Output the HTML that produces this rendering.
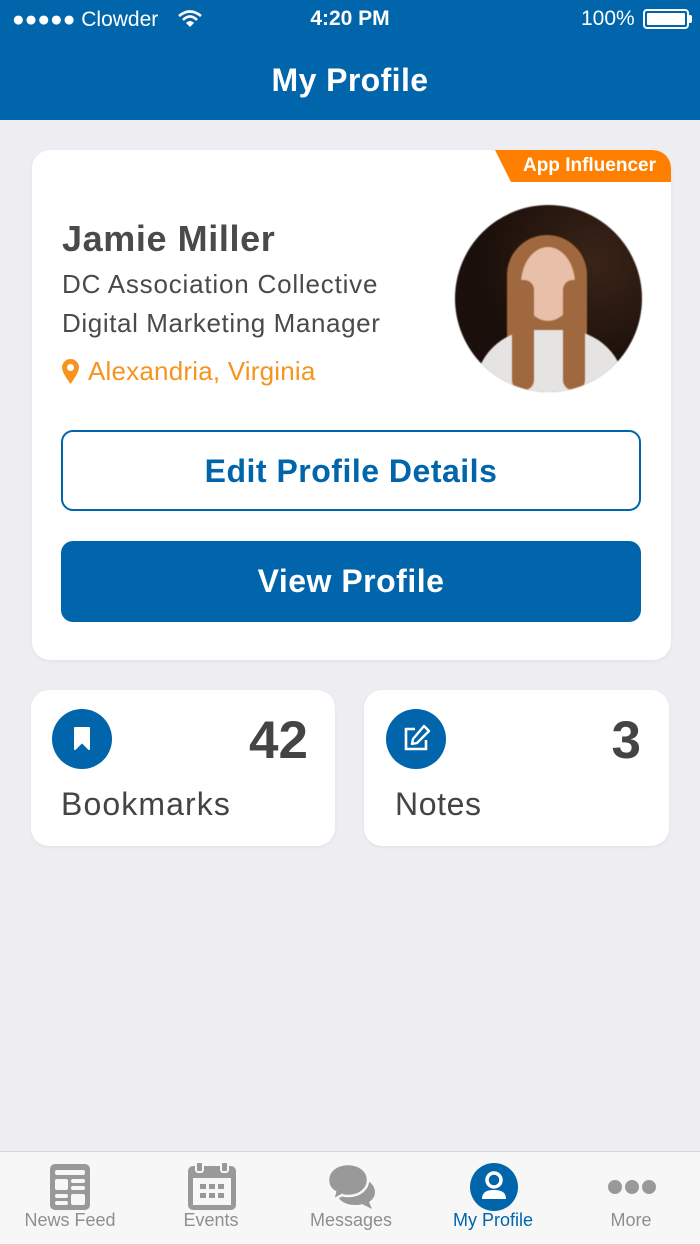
<!DOCTYPE html>
<html><head><meta charset="utf-8"><style>
*{margin:0;padding:0;box-sizing:border-box}
body{width:700px;height:1244px;background:#ededf2;font-family:"Liberation Sans",sans-serif;position:relative;overflow:hidden;color:#444}
.hdr{position:absolute;left:0;top:0;width:700px;height:120px;background:#0065ab;color:#fff}
.abs{position:absolute}
.card{position:absolute;background:#fff;border-radius:18px;box-shadow:0 1px 3px rgba(0,0,0,.06)}
.btn{position:absolute;left:61px;width:580px;height:81px;border-radius:12px;font-weight:bold;font-size:32px;text-align:center;line-height:79px;letter-spacing:.5px}
.tab{position:absolute;top:1210px;width:140px;text-align:center;font-size:18px;color:#8e8e93}
</style></head><body>
<div class="hdr">
  <div class="abs" style="left:12px;top:8px;font-size:21px;">●●●●● Clowder</div>
  <svg class="abs" style="left:177px;top:9px" width="26" height="20" viewBox="0 0 26 20"><path d="M2 7 Q13 -2 24 7" stroke="#fff" stroke-width="2.6" fill="none"/><path d="M6 11 Q13 4 20 11" stroke="#fff" stroke-width="2.6" fill="none"/><path d="M13 18 L9 14 Q13 10 17 14Z" fill="#fff"/></svg>
  <div class="abs" style="left:0;width:700px;top:7px;text-align:center;font-size:21px;font-weight:bold">4:20 PM</div>
  <div class="abs" style="left:581px;top:7px;font-size:21px">100%</div>
  <div class="abs" style="left:643px;top:9px;width:46px;height:20px;border:2px solid #fff;border-radius:4px;padding:2px"><div style="background:#fff;width:100%;height:100%;border-radius:1px"></div></div>
  <div class="abs" style="left:689px;top:15px;width:3px;height:8px;background:#fff;border-radius:0 2px 2px 0"></div>
  <div class="abs" style="left:0;width:700px;top:62px;text-align:center;font-size:32px;font-weight:bold;letter-spacing:.4px">My Profile</div>
</div>

<div class="card" style="left:32px;top:150px;width:639px;height:510px;overflow:hidden">
  <div class="abs" style="right:0;top:0;width:176px;height:32px;background:#ff8000;clip-path:polygon(0 0,100% 0,100% 100%,16px 100%);border-top-right-radius:18px"></div>
  <div class="abs" style="right:15px;top:5px;color:#fff;font-weight:bold;font-size:19px">App Influencer</div>
  <div class="abs" style="left:30px;top:68px;font-size:36px;font-weight:bold;color:#4a4a4a;letter-spacing:.6px">Jamie Miller</div>
  <div class="abs" style="left:30px;top:119px;font-size:26px;color:#4a4a4a;letter-spacing:.8px">DC Association Collective</div>
  <div class="abs" style="left:30px;top:158px;font-size:26px;color:#4a4a4a;letter-spacing:.6px">Digital Marketing Manager</div>
  <svg class="abs" style="left:30px;top:209px" width="17" height="25" viewBox="0 0 17 25"><path d="M8.5 0C3.8 0 0 3.8 0 8.5 0 14 8.5 25 8.5 25S17 14 17 8.5C17 3.8 13.2 0 8.5 0Z" fill="#f7941d"/><circle cx="8.5" cy="8.5" r="3.5" fill="#fff"/></svg>
  <div class="abs" style="left:56px;top:206px;font-size:26px;color:#f7941d;letter-spacing:.2px">Alexandria, Virginia</div>
  <div class="abs" style="left:423px;top:55px;width:187px;height:187px;border-radius:50%;overflow:hidden;background:radial-gradient(ellipse at 75% 30%,#3a2418,#1a0f0a 60%);filter:blur(0.5px)">
    <div class="abs" style="left:52px;top:30px;width:80px;height:150px;border-radius:40px 40px 20px 20px;background:#a0683e"></div>
    <div class="abs" style="left:20px;top:125px;width:150px;height:90px;border-radius:60px 60px 0 0;background:#e6e4e2"></div>
    <div class="abs" style="left:66px;top:42px;width:54px;height:74px;border-radius:50%;background:#e8bfa8"></div>
    <div class="abs" style="left:57px;top:75px;width:22px;height:110px;border-radius:10px;background:#a0683e"></div>
    <div class="abs" style="left:108px;top:75px;width:22px;height:110px;border-radius:10px;background:#a0683e"></div>
  </div>
</div>
<div class="btn" style="top:430px;border:2px solid #0065ab;color:#0065ab;background:#fff">Edit Profile Details</div>
<div class="btn" style="top:541px;background:#0065ab;color:#fff;line-height:81px">View Profile</div>

<div class="card" style="left:31px;top:690px;width:304px;height:156px">
  <div class="abs" style="left:21px;top:19px;width:60px;height:60px;border-radius:50%;background:#0065ab"></div>
  <svg class="abs" style="left:42px;top:36px" width="18" height="26" viewBox="0 0 18 26"><path d="M2 2H16V23L9 16 2 23Z" fill="#fff" stroke="#fff" stroke-linejoin="round" stroke-width="2"/></svg>
  <div class="abs" style="right:27px;top:20px;font-size:53px;font-weight:bold;color:#444">42</div>
  <div class="abs" style="left:30px;top:96px;font-size:32px;color:#444;letter-spacing:1.1px">Bookmarks</div>
</div>
<div class="card" style="left:364px;top:690px;width:305px;height:156px">
  <div class="abs" style="left:22px;top:19px;width:60px;height:60px;border-radius:50%;background:#0065ab"></div>
  <svg class="abs" style="left:36px;top:33px" width="32" height="32" viewBox="0 0 32 32"><path d="M15 6H6V26H26V17" stroke="#fff" stroke-width="2.6" fill="none"/><path d="M24 3L29 8 17 20 12 21 13 16Z" stroke="#fff" stroke-width="2.4" fill="none" stroke-linejoin="round"/></svg>
  <div class="abs" style="right:28px;top:20px;font-size:53px;font-weight:bold;color:#444">3</div>
  <div class="abs" style="left:31px;top:96px;font-size:32px;color:#444;letter-spacing:.6px">Notes</div>
</div>

<div class="abs" style="left:0;top:1151px;width:700px;height:93px;background:#f7f7f7;border-top:1px solid #d6d6da"></div>
<svg class="abs" style="left:50px;top:1164px" width="40" height="46" viewBox="0 0 40 46"><rect x="0" y="0" width="40" height="46" rx="5" fill="#999"/><rect x="5" y="6" width="30" height="5" rx="2" fill="#f7f7f7"/><rect x="5" y="15" width="13" height="11" rx="2" fill="#f7f7f7"/><rect x="21" y="15" width="14" height="4" rx="2" fill="#f7f7f7"/><rect x="21" y="22" width="14" height="4" rx="2" fill="#f7f7f7"/><rect x="5" y="30" width="13" height="4" rx="2" fill="#f7f7f7"/><rect x="5" y="37" width="13" height="4" rx="2" fill="#f7f7f7"/><rect x="21" y="30" width="14" height="11" rx="2" fill="#f7f7f7"/></svg>
<svg class="abs" style="left:188px;top:1162px" width="48" height="48" viewBox="0 0 48 48"><rect x="0" y="4" width="48" height="44" rx="5" fill="#999"/><rect x="5" y="16" width="38" height="27" fill="#f7f7f7"/><rect x="8" y="0" width="7" height="10" rx="2" fill="#999" stroke="#f7f7f7" stroke-width="2"/><rect x="33" y="0" width="7" height="10" rx="2" fill="#999" stroke="#f7f7f7" stroke-width="2"/><g fill="#999"><rect x="12" y="22" width="6" height="5"/><rect x="21" y="22" width="6" height="5"/><rect x="30" y="22" width="6" height="5"/><rect x="12" y="31" width="6" height="5"/><rect x="21" y="31" width="6" height="5"/><rect x="30" y="31" width="6" height="5"/></g></svg>
<svg class="abs" style="left:327px;top:1164px" width="50" height="46" viewBox="0 0 50 46"><path d="M28 14C40 14 48 20 48 28 48 33 45 36 42 38L45 45 35 40C33 41 30 41 28 41 17 41 10 35 10 28 10 20 17 14 28 14Z" fill="#999"/><path d="M21 0C33 0 41 7 41 16 41 25 33 32 21 32 19 32 17 32 15 31L6 36 8 28C3 25 1 21 1 16 1 7 9 0 21 0Z" fill="#999" stroke="#f7f7f7" stroke-width="2.5"/></svg>
<svg class="abs" style="left:470px;top:1163px" width="48" height="48" viewBox="0 0 48 48"><circle cx="24" cy="24" r="24" fill="#0065ab"/><circle cx="24" cy="17" r="7" fill="none" stroke="#fff" stroke-width="3.5"/><path d="M12 36C12 29 17 27 24 27S36 29 36 36 Z" fill="#fff"/></svg>
<svg class="abs" style="left:608px;top:1179px" width="48" height="16" viewBox="0 0 48 16"><circle cx="7" cy="8" r="7" fill="#999"/><circle cx="24" cy="8" r="7" fill="#999"/><circle cx="41" cy="8" r="7" fill="#999"/></svg>
<div class="tab" style="left:0">News Feed</div>
<div class="tab" style="left:141px">Events</div>
<div class="tab" style="left:281px">Messages</div>
<div class="tab" style="left:423px;color:#0065ab">My Profile</div>
<div class="tab" style="left:561px">More</div>
</body></html>
